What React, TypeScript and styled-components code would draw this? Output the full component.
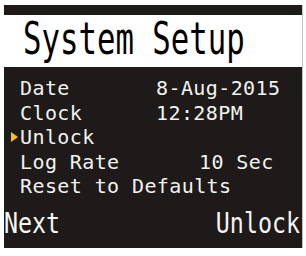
import styled, { createGlobalStyle } from "styled-components"

type RowType = {
  label: string
  value?: string
  valueShift?: number
  selected?: boolean
}

const rows: RowType[] = [
  { label: "Date", value: "8-Aug-2015" },
  { label: "Clock", value: "12:28PM" },
  { label: "Unlock", selected: true },
  { label: "Log Rate", value: "10 Sec", valueShift: 43 },
  { label: "Reset to Defaults" },
]

export default function App() {
  return (
    <>
      <GlobalStyle />
      <Screen>
        <TitleBand>
          <Title>System Setup</Title>
        </TitleBand>
        <Menu>
          {rows.map((row) => (
            <Row key={row.label}>
              <Gutter>{row.selected && <Marker />}</Gutter>
              <Label>{row.label}</Label>
              {row.value && <Value $shift={row.valueShift ?? 0}>{row.value}</Value>}
            </Row>
          ))}
        </Menu>
        <SoftKeys>
          <SoftKey>Next</SoftKey>
          <SoftKey>Unlock</SoftKey>
        </SoftKeys>
      </Screen>
    </>
  )
}

const GlobalStyle = createGlobalStyle`
  html, body {
    margin: 0;
    padding: 0;
    background: #ffffff;
  }
  body {
    font-family: "DejaVu Sans Mono", monospace;
  }
`

const Screen = styled.div`
  margin: 5px 0 0 4px;
  width: 298px;
  height: 243px;
  background: #1d1a19;
  box-shadow: 1px 0 0 #c4c4c4;
  display: flex;
  flex-direction: column;
`

const TitleBand = styled.div`
  margin-top: 10px;
  height: 52px;
  background: #ffffff;
  padding: 11px 0 0 19px;
  box-sizing: border-box;
`

// the display font is tall and narrow: set the width by font size, stretch the height
const Title = styled.div`
  font-size: 30.7px;
  line-height: 36px;
  color: #000000;
  white-space: pre;
  transform: scaleY(1.47);
  transform-origin: 0 29px;
`

const Menu = styled.div`
  padding-top: 9px;
  display: flex;
  flex-direction: column;
`

const Row = styled.div`
  display: grid;
  grid-template-columns: 16px 136px 1fr;
  align-items: center;
  height: 24.5px;
  font-size: 20px;
  line-height: 24.5px;
  letter-spacing: 0.4px;
  color: #f3f2ee;
  white-space: pre;
`

const Gutter = styled.div`
  display: flex;
  justify-content: flex-end;
  padding-right: 2px;
`

const Marker = styled.span`
  width: 0;
  height: 0;
  border-top: 5px solid transparent;
  border-bottom: 5px solid transparent;
  border-left: 7px solid #f2c21b;
`

const Label = styled.span``

const Value = styled.span<{ $shift: number }>`
  padding-left: ${(p) => p.$shift}px;
`

const SoftKeys = styled.div`
  margin-top: auto;
  padding: 0 2px 8px 0;
  display: flex;
  justify-content: space-between;
  font-size: 23.3px;
  line-height: 30px;
  color: #f6f5f2;
`

const SoftKey = styled.span`
  display: inline-block;
  transform: scaleY(1.18);
  transform-origin: 0 23px;
`
